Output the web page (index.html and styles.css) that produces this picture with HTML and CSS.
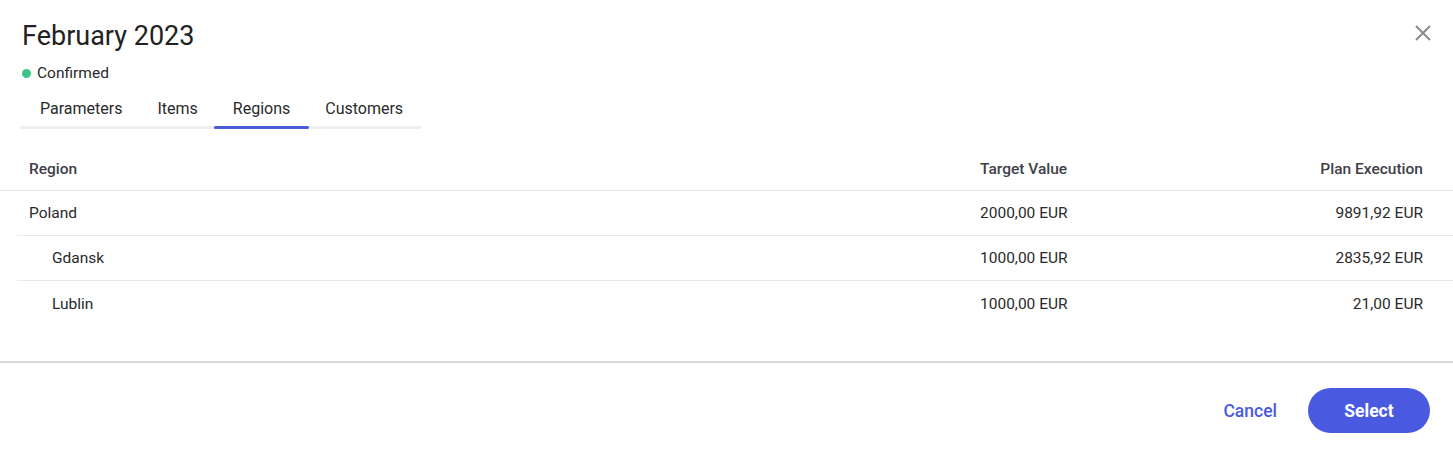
FILE: index.html
```html
<!DOCTYPE html>
<html>
<head>
<meta charset="utf-8">
<link rel="stylesheet" href="styles.css">
</head>
<body>
<div class="dialog">
  <header class="head">
    <div class="head-text">
      <h1 class="title">February 2023</h1>
      <div class="status"><span class="dot"></span>Confirmed</div>
    </div>
    <button class="close" aria-label="Close">
      <svg width="16" height="16" viewBox="0 0 16 16"><path d="M1 1L15 15M15 1L1 15" stroke="#8a8a8a" stroke-width="2" fill="none"/></svg>
    </button>
  </header>
  <nav class="tabs">
    <span class="tab">Parameters</span>
    <span class="tab">Items</span>
    <span class="tab active">Regions</span>
    <span class="tab">Customers</span>
  </nav>
  <div class="table">
    <div class="row header">
      <div class="c-name">Region</div>
      <div class="c-target">Target Value</div>
      <div class="c-plan">Plan Execution</div>
    </div>
    <div class="row">
      <div class="c-name">Poland</div>
      <div class="c-target">2000,00 EUR</div>
      <div class="c-plan">9891,92 EUR</div>
    </div>
    <div class="row">
      <div class="c-name child">Gdansk</div>
      <div class="c-target">1000,00 EUR</div>
      <div class="c-plan">2835,92 EUR</div>
    </div>
    <div class="row last">
      <div class="c-name child">Lublin</div>
      <div class="c-target">1000,00 EUR</div>
      <div class="c-plan">21,00 EUR</div>
    </div>
  </div>
  <footer class="foot">
    <button class="btn-text">Cancel</button>
    <button class="btn-primary">Select</button>
  </footer>
</div>
</body>
</html>
```
FILE: styles.css
```css
* { box-sizing: border-box; }
html, body { margin: 0; padding: 0; background: #fff; }
body { font-family: Roboto, "Liberation Sans", sans-serif; color: #333; }
.dialog { width: 1453px; height: 456px; display: flex; flex-direction: column; }
.head { display: flex; justify-content: space-between; align-items: flex-start; padding: 20px 22px 0 22px; }
.title { margin: 0; font-size: 27px; font-weight: 400; color: #222; line-height: 32px; }
.status { display: flex; align-items: center; font-size: 15.5px; color: #2a2a2a; margin-top: 11px; line-height: 20px; }
.dot { width: 9px; height: 9px; border-radius: 50%; background: #3cc48a; margin-right: 6px; }
.close { border: 0; background: none; padding: 0; margin-top: 5px; margin-right: 0; cursor: pointer; line-height: 0; }
.tabs { display: flex; margin: 14px 0 0 20px; width: 401px; border-bottom: 3px solid #efeff1; }
.tab { position: relative; padding: 0 17.5px; height: 29px; line-height: 24px; font-size: 16px; color: #2a2a2a; }
.tab:first-child { padding-left: 20px; }
.tab.active::after { content: ""; position: absolute; left: -1px; right: -1px; bottom: -3px; height: 3px; background: #4a5bdc; border-radius: 2px; }
.table { margin-top: 19px; }
.row { display: flex; align-items: center; height: 45px; margin-left: 17px; border-bottom: 1px solid #e6e6ee; font-size: 15.5px; color: #2a2a2a; }
.row.last { border-bottom: 0; }
.row.header { margin-left: 0; padding-left: 17px; height: 43px; font-weight: 500; color: #404048; }
.c-name { flex: 1; padding-left: 12px; }
.c-name.child { padding-left: 35px; }
.c-target { width: 273px; }
.c-plan { width: 200px; text-align: right; padding-right: 30px; }
.foot { margin-top: auto; border-top: 2px solid #d6d6d6; height: 95px; display: flex; justify-content: flex-end; align-items: center; padding: 2px 23px 0 0; gap: 31px; }
.btn-text { border: 0; background: none; font-family: inherit; font-size: 17.5px; font-weight: 500; color: #4a5bdc; padding: 0; cursor: pointer; }
.btn-primary { border: 0; background: #4a5ae0; color: #fff; font-family: inherit; font-size: 17.5px; font-weight: 700; width: 122px; height: 45px; border-radius: 23px; cursor: pointer; }
```
